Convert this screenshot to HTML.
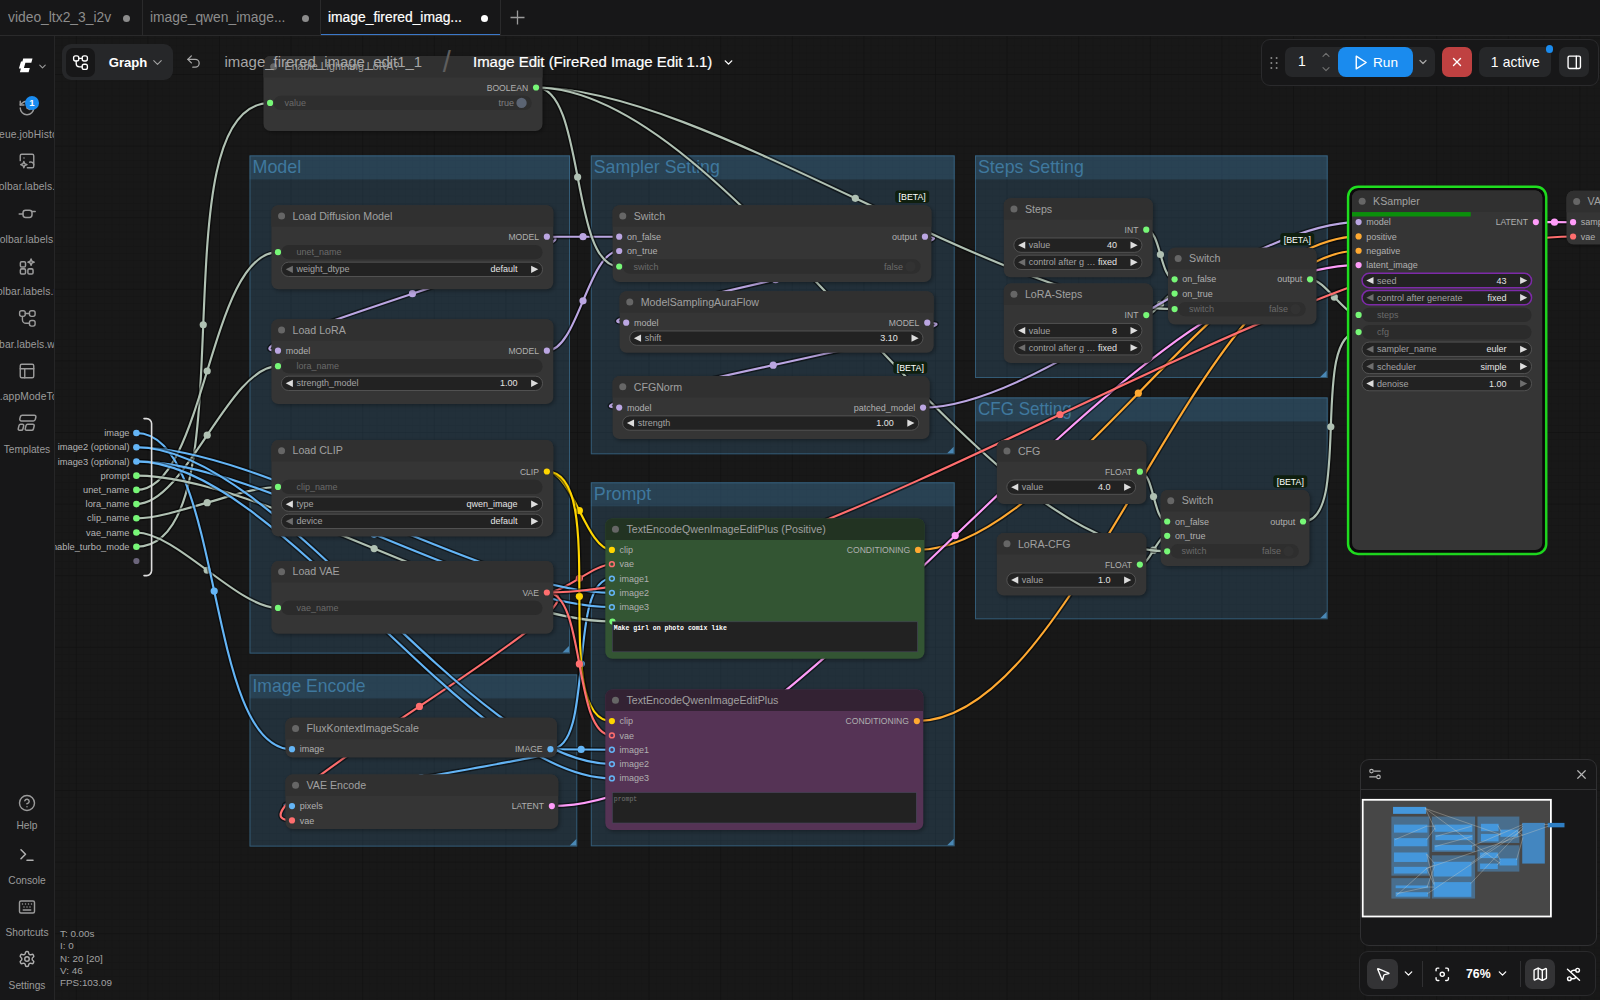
<!DOCTYPE html>
<html lang="en"><head><meta charset="utf-8"><title>ComfyUI</title>
<style>
html,body{margin:0;padding:0;background:#171717;}
body{width:1600px;height:1000px;position:relative;overflow:hidden;font-family:"Liberation Sans",sans-serif;color:#fff;}
#cv{position:absolute;left:0;top:0;}
.abs{position:absolute;}
#topbar{position:absolute;left:0;top:0;width:1600px;height:35px;background:#171718;border-bottom:1px solid #2a2a2b;}
.tab{position:absolute;top:0;height:35px;font-size:13.85px;color:#8c8c8c;line-height:35.5px;white-space:nowrap;}
.tab .dot{position:absolute;top:15px;width:7px;height:7px;border-radius:50%;background:#8c8c8c;}
.tab.act{color:#fff;-webkit-text-stroke:.2px #fff;border-bottom:1.5px solid #3b78c9;height:34px;}
.tab.act .dot{background:#fff;}
.tsep{position:absolute;top:0;width:1px;height:35px;background:#2a2a2b;}
#side{position:absolute;left:0;top:36px;width:54px;height:964px;background:#171718;border-right:1px solid #262627;overflow:hidden;}
.sb{position:absolute;left:0;width:54px;text-align:center;}
.sb svg{display:block;margin:0 auto;}
.sl{position:absolute;left:-73px;width:200px;text-align:center;font-size:10.3px;letter-spacing:.12px;margin-top:1.3px;color:#9b9b9b;white-space:nowrap;line-height:12px;}
#crumb{position:absolute;left:0;top:36px;}
.pill{position:absolute;left:62px;top:44px;width:111px;height:36px;border-radius:9px;background:#262729;}
.pill .ib{position:absolute;left:4px;top:3.5px;width:29px;height:29px;border-radius:7px;background:#171718;}
.pill .gt{position:absolute;left:46.8px;top:0.5px;line-height:36px;font-size:13.1px;font-weight:bold;color:#fff;}
.bc{position:absolute;top:50px;font-size:15.2px;line-height:24px;white-space:nowrap;}
#actbar{position:absolute;left:1261px;top:39px;width:335.5px;height:44.5px;border:1px solid #2a2a2c;border-radius:9px;background:#171718;}
.ab{position:absolute;top:47px;height:29.6px;border-radius:7px;background:#262729;}
#mini{position:absolute;left:1360px;top:758.7px;width:235px;height:185px;border:1px solid #303032;border-radius:9px;background:#171718;}
#tool{position:absolute;left:1359px;top:950.6px;width:235px;height:43.4px;border:1px solid #2a2a2c;border-radius:9px;background:#171718;}
#stats{position:absolute;left:60px;top:928px;font-size:9.85px;line-height:12.3px;color:#a2a2a2;white-space:pre;}

</style></head>
<body>
<svg id="cv" width="1600" height="1000" viewBox="0 0 1600 1000" font-family='"Liberation Sans", sans-serif'>
<defs><filter id="sh" x="-10%" y="-10%" width="120%" height="130%"><feGaussianBlur stdDeviation="2"/></filter>
<pattern id="grid" width="7.16" height="7.16" patternUnits="userSpaceOnUse" x="4.2" y="2.4"><path d="M0 0H7.16 M0 0V7.16" stroke="#141414" stroke-width="1" fill="none"/></pattern>
<pattern id="grid2" width="71.6" height="71.6" patternUnits="userSpaceOnUse" x="4.2" y="2.4"><path d="M0 0H71.6 M0 0V71.6" stroke="#0f0f0f" stroke-width="1.2" fill="none"/></pattern>
</defs>
<rect width="1600" height="1000" fill="#181818"/>
<rect width="1600" height="1000" fill="url(#grid)"/>
<rect width="1600" height="1000" fill="url(#grid2)"/>
<rect x="249.5" y="155.4" width="320.5" height="498.2" fill="#3f789e" fill-opacity=".25"/>
<rect x="249.5" y="155.4" width="320.5" height="24" fill="#3f789e" fill-opacity=".25"/>
<rect x="250" y="155.9" width="319.5" height="497.2" fill="none" stroke="#3f789e" stroke-opacity=".6" stroke-width="1"/>
<path d="M569 652.6 L562.5 652.6 L569 646.1 Z" fill="#4a88b5"/>
<text x="252.5" y="173" font-size="17.8" fill="#3f789e" textLength="48.7" lengthAdjust="spacingAndGlyphs">Model</text>
<rect x="590.8" y="155.4" width="363.9" height="298.9" fill="#3f789e" fill-opacity=".25"/>
<rect x="590.8" y="155.4" width="363.9" height="24" fill="#3f789e" fill-opacity=".25"/>
<rect x="591.3" y="155.9" width="362.9" height="297.9" fill="none" stroke="#3f789e" stroke-opacity=".6" stroke-width="1"/>
<path d="M953.7 453.3 L947.2 453.3 L953.7 446.8 Z" fill="#4a88b5"/>
<text x="593.8" y="173" font-size="17.8" fill="#3f789e" textLength="126" lengthAdjust="spacingAndGlyphs">Sampler Setting</text>
<rect x="975" y="155.4" width="352.7" height="222.6" fill="#3f789e" fill-opacity=".25"/>
<rect x="975" y="155.4" width="352.7" height="24" fill="#3f789e" fill-opacity=".25"/>
<rect x="975.5" y="155.9" width="351.7" height="221.6" fill="none" stroke="#3f789e" stroke-opacity=".6" stroke-width="1"/>
<path d="M1326.7 377 L1320.2 377 L1326.7 370.5 Z" fill="#4a88b5"/>
<text x="978" y="173" font-size="17.8" fill="#3f789e" textLength="105.8" lengthAdjust="spacingAndGlyphs">Steps Setting</text>
<rect x="975" y="397.4" width="352.7" height="221.9" fill="#3f789e" fill-opacity=".25"/>
<rect x="975" y="397.4" width="352.7" height="24" fill="#3f789e" fill-opacity=".25"/>
<rect x="975.5" y="397.9" width="351.7" height="220.9" fill="none" stroke="#3f789e" stroke-opacity=".6" stroke-width="1"/>
<path d="M1326.7 618.3 L1320.2 618.3 L1326.7 611.8 Z" fill="#4a88b5"/>
<text x="978" y="415" font-size="17.8" fill="#3f789e" textLength="93.7" lengthAdjust="spacingAndGlyphs">CFG Setting</text>
<rect x="590.8" y="482.3" width="363.9" height="364" fill="#3f789e" fill-opacity=".25"/>
<rect x="590.8" y="482.3" width="363.9" height="24" fill="#3f789e" fill-opacity=".25"/>
<rect x="591.3" y="482.8" width="362.9" height="363" fill="none" stroke="#3f789e" stroke-opacity=".6" stroke-width="1"/>
<path d="M953.7 845.3 L947.2 845.3 L953.7 838.8 Z" fill="#4a88b5"/>
<text x="593.8" y="499.9" font-size="17.8" fill="#3f789e" textLength="57.4" lengthAdjust="spacingAndGlyphs">Prompt</text>
<rect x="249.5" y="674.4" width="327.8" height="172.2" fill="#3f789e" fill-opacity=".25"/>
<rect x="249.5" y="674.4" width="327.8" height="24" fill="#3f789e" fill-opacity=".25"/>
<rect x="250" y="674.9" width="326.8" height="171.2" fill="none" stroke="#3f789e" stroke-opacity=".6" stroke-width="1"/>
<path d="M576.3 845.6 L569.8 845.6 L576.3 839.1 Z" fill="#4a88b5"/>
<text x="252.5" y="692" font-size="17.8" fill="#3f789e" textLength="113.1" lengthAdjust="spacingAndGlyphs">Image Encode</text>
<g fill="none" stroke-linecap="round">
<path d="M136.4 546.76 C252.27 546.76 154.21 102.96 270.09 102.96" stroke="#000" stroke-opacity=".5" stroke-width="5"/>
<path d="M136.4 546.76 C252.27 546.76 154.21 102.96 270.09 102.96" stroke="#b0c1b3" stroke-width="2.15"/>
<circle cx="203.24" cy="324.86" r="3.6" fill="#b0c1b3"/>
<path d="M136.4 489.88 C205.57 489.88 208.81 252.16 277.99 252.16" stroke="#000" stroke-opacity=".5" stroke-width="5"/>
<path d="M136.4 489.88 C205.57 489.88 208.81 252.16 277.99 252.16" stroke="#b0c1b3" stroke-width="2.15"/>
<circle cx="207.19" cy="371.02" r="3.6" fill="#b0c1b3"/>
<path d="M546.86 236.7 C619.87 236.7 204.98 350.7 277.99 350.7" stroke="#000" stroke-opacity=".5" stroke-width="5"/>
<path d="M546.86 236.7 C619.87 236.7 204.98 350.7 277.99 350.7" stroke="#bba6e2" stroke-width="2.15"/>
<circle cx="412.42" cy="293.7" r="3.6" fill="#bba6e2"/>
<path d="M136.4 504.1 C185.82 504.1 228.57 366.16 277.99 366.16" stroke="#000" stroke-opacity=".5" stroke-width="5"/>
<path d="M136.4 504.1 C185.82 504.1 228.57 366.16 277.99 366.16" stroke="#b0c1b3" stroke-width="2.15"/>
<circle cx="207.19" cy="435.13" r="3.6" fill="#b0c1b3"/>
<path d="M136.4 518.32 C172.65 518.32 241.73 486.96 277.99 486.96" stroke="#000" stroke-opacity=".5" stroke-width="5"/>
<path d="M136.4 518.32 C172.65 518.32 241.73 486.96 277.99 486.96" stroke="#b0c1b3" stroke-width="2.15"/>
<circle cx="207.19" cy="502.64" r="3.6" fill="#b0c1b3"/>
<path d="M136.4 532.54 C176.51 532.54 237.88 607.96 277.99 607.96" stroke="#000" stroke-opacity=".5" stroke-width="5"/>
<path d="M136.4 532.54 C176.51 532.54 237.88 607.96 277.99 607.96" stroke="#b0c1b3" stroke-width="2.15"/>
<circle cx="207.19" cy="570.25" r="3.6" fill="#b0c1b3"/>
<path d="M136.4 433 C224.5 433 203.88 749.2 291.99 749.2" stroke="#000" stroke-opacity=".5" stroke-width="5"/>
<path d="M136.4 433 C224.5 433 203.88 749.2 291.99 749.2" stroke="#64B5F6" stroke-width="2.15"/>
<circle cx="214.19" cy="591.1" r="3.6" fill="#64B5F6"/>
<path d="M550.46 749.2 C616.62 749.2 225.82 806.1 291.99 806.1" stroke="#000" stroke-opacity=".5" stroke-width="5"/>
<path d="M550.46 749.2 C616.62 749.2 225.82 806.1 291.99 806.1" stroke="#64B5F6" stroke-width="2.15"/>
<circle cx="421.22" cy="777.65" r="3.6" fill="#64B5F6"/>
<path d="M546.86 592.5 C632.33 592.5 206.51 820.42 291.99 820.42" stroke="#000" stroke-opacity=".5" stroke-width="5"/>
<path d="M546.86 592.5 C632.33 592.5 206.51 820.42 291.99 820.42" stroke="#FF6E6E" stroke-width="2.15"/>
<circle cx="419.42" cy="706.46" r="3.6" fill="#FF6E6E"/>
<path d="M546.86 236.7 C564.94 236.7 601.1 236.7 619.19 236.7" stroke="#000" stroke-opacity=".5" stroke-width="5"/>
<path d="M546.86 236.7 C564.94 236.7 601.1 236.7 619.19 236.7" stroke="#bba6e2" stroke-width="2.15"/>
<circle cx="583.02" cy="236.7" r="3.6" fill="#bba6e2"/>
<path d="M546.86 350.7 C577.65 350.7 588.4 251.02 619.19 251.02" stroke="#000" stroke-opacity=".5" stroke-width="5"/>
<path d="M546.86 350.7 C577.65 350.7 588.4 251.02 619.19 251.02" stroke="#bba6e2" stroke-width="2.15"/>
<circle cx="583.02" cy="300.86" r="3.6" fill="#bba6e2"/>
<path d="M536.06 87.5 C585.39 87.5 569.85 266.48 619.19 266.48" stroke="#000" stroke-opacity=".5" stroke-width="5"/>
<path d="M536.06 87.5 C585.39 87.5 569.85 266.48 619.19 266.48" stroke="#b0c1b3" stroke-width="2.15"/>
<circle cx="577.62" cy="176.99" r="3.6" fill="#b0c1b3"/>
<path d="M924.96 236.7 C1002.68 236.7 548.46 322.7 626.19 322.7" stroke="#000" stroke-opacity=".5" stroke-width="5"/>
<path d="M924.96 236.7 C1002.68 236.7 548.46 322.7 626.19 322.7" stroke="#bba6e2" stroke-width="2.15"/>
<circle cx="775.57" cy="279.7" r="3.6" fill="#bba6e2"/>
<path d="M927.26 322.7 C1007.14 322.7 539.3 407.6 619.19 407.6" stroke="#000" stroke-opacity=".5" stroke-width="5"/>
<path d="M927.26 322.7 C1007.14 322.7 539.3 407.6 619.19 407.6" stroke="#bba6e2" stroke-width="2.15"/>
<circle cx="773.22" cy="365.15" r="3.6" fill="#bba6e2"/>
<path d="M546.86 471.5 C572.32 471.5 586.42 549.9 611.89 549.9" stroke="#000" stroke-opacity=".5" stroke-width="5"/>
<path d="M546.86 471.5 C572.32 471.5 586.42 549.9 611.89 549.9" stroke="#FFD500" stroke-width="2.15"/>
<circle cx="579.37" cy="510.7" r="3.6" fill="#FFD500"/>
<path d="M546.86 592.5 C564.58 592.5 594.16 564.22 611.89 564.22" stroke="#000" stroke-opacity=".5" stroke-width="5"/>
<path d="M546.86 592.5 C564.58 592.5 594.16 564.22 611.89 564.22" stroke="#FF6E6E" stroke-width="2.15"/>
<circle cx="579.37" cy="578.36" r="3.6" fill="#FF6E6E"/>
<path d="M550.46 749.2 C595.8 749.2 566.54 578.54 611.89 578.54" stroke="#000" stroke-opacity=".5" stroke-width="5"/>
<path d="M550.46 749.2 C595.8 749.2 566.54 578.54 611.89 578.54" stroke="#64B5F6" stroke-width="2.15"/>
<circle cx="581.17" cy="663.87" r="3.6" fill="#64B5F6"/>
<path d="M136.4 447.22 C260.72 447.22 487.56 592.86 611.89 592.86" stroke="#000" stroke-opacity=".5" stroke-width="5"/>
<path d="M136.4 447.22 C260.72 447.22 487.56 592.86 611.89 592.86" stroke="#64B5F6" stroke-width="2.15"/>
<circle cx="374.14" cy="520.04" r="3.6" fill="#64B5F6"/>
<path d="M136.4 461.44 C260.73 461.44 487.56 607.18 611.89 607.18" stroke="#000" stroke-opacity=".5" stroke-width="5"/>
<path d="M136.4 461.44 C260.73 461.44 487.56 607.18 611.89 607.18" stroke="#64B5F6" stroke-width="2.15"/>
<circle cx="374.14" cy="534.31" r="3.6" fill="#64B5F6"/>
<path d="M136.4 475.66 C260.74 475.66 487.55 621.5 611.89 621.5" stroke="#000" stroke-opacity=".5" stroke-width="5"/>
<path d="M136.4 475.66 C260.74 475.66 487.55 621.5 611.89 621.5" stroke="#b0c1b3" stroke-width="2.15"/>
<circle cx="374.14" cy="548.58" r="3.6" fill="#b0c1b3"/>
<path d="M546.86 471.5 C611.34 471.5 547.4 721.1 611.89 721.1" stroke="#000" stroke-opacity=".5" stroke-width="5"/>
<path d="M546.86 471.5 C611.34 471.5 547.4 721.1 611.89 721.1" stroke="#FFD500" stroke-width="2.15"/>
<circle cx="579.37" cy="596.3" r="3.6" fill="#FFD500"/>
<path d="M546.86 592.5 C586.11 592.5 572.63 735.42 611.89 735.42" stroke="#000" stroke-opacity=".5" stroke-width="5"/>
<path d="M546.86 592.5 C586.11 592.5 572.63 735.42 611.89 735.42" stroke="#FF6E6E" stroke-width="2.15"/>
<circle cx="579.37" cy="663.96" r="3.6" fill="#FF6E6E"/>
<path d="M550.46 749.2 C565.81 749.2 596.53 749.74 611.89 749.74" stroke="#000" stroke-opacity=".5" stroke-width="5"/>
<path d="M550.46 749.2 C565.81 749.2 596.53 749.74 611.89 749.74" stroke="#64B5F6" stroke-width="2.15"/>
<circle cx="581.17" cy="749.47" r="3.6" fill="#64B5F6"/>
<path d="M136.4 447.22 C279.25 447.22 469.04 764.06 611.89 764.06" stroke="#000" stroke-opacity=".5" stroke-width="5"/>
<path d="M136.4 447.22 C279.25 447.22 469.04 764.06 611.89 764.06" stroke="#64B5F6" stroke-width="2.15"/>
<circle cx="374.14" cy="605.64" r="3.6" fill="#64B5F6"/>
<path d="M136.4 461.44 C279.26 461.44 469.03 778.38 611.89 778.38" stroke="#000" stroke-opacity=".5" stroke-width="5"/>
<path d="M136.4 461.44 C279.26 461.44 469.03 778.38 611.89 778.38" stroke="#64B5F6" stroke-width="2.15"/>
<circle cx="374.14" cy="619.91" r="3.6" fill="#64B5F6"/>
<path d="M1146.26 229.7 C1160.54 229.7 1160.31 279.3 1174.59 279.3" stroke="#000" stroke-opacity=".5" stroke-width="5"/>
<path d="M1146.26 229.7 C1160.54 229.7 1160.31 279.3 1174.59 279.3" stroke="#b0c1b3" stroke-width="2.15"/>
<circle cx="1160.42" cy="254.5" r="3.6" fill="#b0c1b3"/>
<path d="M1146.26 315.1 C1155.14 315.1 1165.7 293.62 1174.59 293.62" stroke="#000" stroke-opacity=".5" stroke-width="5"/>
<path d="M1146.26 315.1 C1155.14 315.1 1165.7 293.62 1174.59 293.62" stroke="#b0c1b3" stroke-width="2.15"/>
<circle cx="1160.42" cy="304.36" r="3.6" fill="#b0c1b3"/>
<path d="M536.06 87.5 C705.03 87.5 1005.62 309.08 1174.59 309.08" stroke="#000" stroke-opacity=".5" stroke-width="5"/>
<path d="M536.06 87.5 C705.03 87.5 1005.62 309.08 1174.59 309.08" stroke="#b0c1b3" stroke-width="2.15"/>
<circle cx="855.32" cy="198.29" r="3.6" fill="#b0c1b3"/>
<path d="M1139.86 471.7 C1154.06 471.7 1152.99 521.5 1167.19 521.5" stroke="#000" stroke-opacity=".5" stroke-width="5"/>
<path d="M1139.86 471.7 C1154.06 471.7 1152.99 521.5 1167.19 521.5" stroke="#b0c1b3" stroke-width="2.15"/>
<circle cx="1153.52" cy="496.6" r="3.6" fill="#b0c1b3"/>
<path d="M1139.86 564.6 C1149.78 564.6 1157.26 535.82 1167.19 535.82" stroke="#000" stroke-opacity=".5" stroke-width="5"/>
<path d="M1139.86 564.6 C1149.78 564.6 1157.26 535.82 1167.19 535.82" stroke="#b0c1b3" stroke-width="2.15"/>
<circle cx="1153.52" cy="550.21" r="3.6" fill="#b0c1b3"/>
<path d="M536.06 87.5 C731.86 87.5 971.39 551.28 1167.19 551.28" stroke="#000" stroke-opacity=".5" stroke-width="5"/>
<path d="M536.06 87.5 C731.86 87.5 971.39 551.28 1167.19 551.28" stroke="#b0c1b3" stroke-width="2.15"/>
<circle cx="851.62" cy="319.39" r="3.6" fill="#b0c1b3"/>
<path d="M923.06 407.6 C1041.4 407.6 1240.24 222.1 1358.59 222.1" stroke="#000" stroke-opacity=".5" stroke-width="5"/>
<path d="M923.06 407.6 C1041.4 407.6 1240.24 222.1 1358.59 222.1" stroke="#bba6e2" stroke-width="2.15"/>
<circle cx="1140.82" cy="314.85" r="3.6" fill="#bba6e2"/>
<path d="M918.06 549.9 C1053.23 549.9 1223.42 236.42 1358.59 236.42" stroke="#000" stroke-opacity=".5" stroke-width="5"/>
<path d="M918.06 549.9 C1053.23 549.9 1223.42 236.42 1358.59 236.42" stroke="#FFA931" stroke-width="2.15"/>
<circle cx="1138.32" cy="393.16" r="3.6" fill="#FFA931"/>
<path d="M916.86 721.1 C1078.17 721.1 1197.27 250.74 1358.59 250.74" stroke="#000" stroke-opacity=".5" stroke-width="5"/>
<path d="M916.86 721.1 C1078.17 721.1 1197.27 250.74 1358.59 250.74" stroke="#FFA931" stroke-width="2.15"/>
<circle cx="1137.72" cy="485.92" r="3.6" fill="#FFA931"/>
<path d="M551.86 806.1 C794.7 806.1 1115.75 265.06 1358.59 265.06" stroke="#000" stroke-opacity=".5" stroke-width="5"/>
<path d="M551.86 806.1 C794.7 806.1 1115.75 265.06 1358.59 265.06" stroke="#FF9CF9" stroke-width="2.15"/>
<circle cx="955.22" cy="535.58" r="3.6" fill="#FF9CF9"/>
<path d="M1310.06 279.3 C1325.1 279.3 1343.54 314.89 1358.59 314.89" stroke="#000" stroke-opacity=".5" stroke-width="5"/>
<path d="M1310.06 279.3 C1325.1 279.3 1343.54 314.89 1358.59 314.89" stroke="#b0c1b3" stroke-width="2.15"/>
<circle cx="1334.32" cy="297.1" r="3.6" fill="#b0c1b3"/>
<path d="M1303.06 521.5 C1352.41 521.5 1309.24 332.07 1358.59 332.07" stroke="#000" stroke-opacity=".5" stroke-width="5"/>
<path d="M1303.06 521.5 C1352.41 521.5 1309.24 332.07 1358.59 332.07" stroke="#b0c1b3" stroke-width="2.15"/>
<circle cx="1330.82" cy="426.79" r="3.6" fill="#b0c1b3"/>
<path d="M1535.86 222.1 C1545.16 222.1 1563.78 222.2 1573.09 222.2" stroke="#000" stroke-opacity=".5" stroke-width="5"/>
<path d="M1535.86 222.1 C1545.16 222.1 1563.78 222.2 1573.09 222.2" stroke="#FF9CF9" stroke-width="2.15"/>
<circle cx="1554.47" cy="222.15" r="3.6" fill="#FF9CF9"/>
<path d="M546.86 592.5 C818.41 592.5 1301.53 236.52 1573.09 236.52" stroke="#000" stroke-opacity=".5" stroke-width="5"/>
<path d="M546.86 592.5 C818.41 592.5 1301.53 236.52 1573.09 236.52" stroke="#FF6E6E" stroke-width="2.15"/>
<circle cx="1059.97" cy="414.51" r="3.6" fill="#FF6E6E"/>
</g>
<circle cx="136.4" cy="433" r="3.3" fill="#64B5F6"/>
<text x="129.5" y="436.1" font-size="9.3" fill="#b4b4b4" text-anchor="end">image</text>
<circle cx="136.4" cy="447.22" r="3.3" fill="#64B5F6"/>
<text x="129.5" y="450.32" font-size="9.3" fill="#b4b4b4" text-anchor="end">image2 (optional)</text>
<circle cx="136.4" cy="461.44" r="3.3" fill="#64B5F6"/>
<text x="129.5" y="464.54" font-size="9.3" fill="#b4b4b4" text-anchor="end">image3 (optional)</text>
<circle cx="136.4" cy="475.66" r="3.3" fill="#77f777"/>
<text x="129.5" y="478.76" font-size="9.3" fill="#b4b4b4" text-anchor="end">prompt</text>
<circle cx="136.4" cy="489.88" r="3.3" fill="#77f777"/>
<text x="129.5" y="492.98" font-size="9.3" fill="#b4b4b4" text-anchor="end">unet_name</text>
<circle cx="136.4" cy="504.1" r="3.3" fill="#77f777"/>
<text x="129.5" y="507.2" font-size="9.3" fill="#b4b4b4" text-anchor="end">lora_name</text>
<circle cx="136.4" cy="518.32" r="3.3" fill="#77f777"/>
<text x="129.5" y="521.42" font-size="9.3" fill="#b4b4b4" text-anchor="end">clip_name</text>
<circle cx="136.4" cy="532.54" r="3.3" fill="#77f777"/>
<text x="129.5" y="535.64" font-size="9.3" fill="#b4b4b4" text-anchor="end">vae_name</text>
<circle cx="136.4" cy="546.76" r="3.3" fill="#77f777"/>
<text x="129.5" y="549.86" font-size="9.3" fill="#b4b4b4" text-anchor="end">enable_turbo_mode</text>
<circle cx="136.4" cy="560.98" r="3.1" fill="#6b657b"/>
<path d="M144 418.6 h2.6 a5 5 0 0 1 5 5 v147 a5 5 0 0 1 -5 5 h-2.6" fill="none" stroke="#dedede" stroke-width="1.6" stroke-linecap="round"/>
<g>
<rect x="265" y="57.5" width="279" height="75" rx="7" fill="#000" fill-opacity=".35" filter="url(#sh)"/>
<rect x="263.5" y="56" width="279" height="75" rx="7" fill="#353535"/>
<path d="M270.5 56 h265 a7 7 0 0 1 7 7 v14.48 h-279 v-14.48 a7 7 0 0 1 7 -7 Z" fill="#303030"/>
<circle cx="273.67" cy="66.74" r="3.5" fill="#666"/>
<text x="284.62" y="70.44" font-size="10.65" fill="#a0a0a0">Enable Lightning LoRA?</text>
<circle cx="536.06" cy="87.5" r="3.1" fill="#77f777"/>
<text x="528.18" y="90.6" font-size="8.59" fill="#b0b0b0" text-anchor="end">BOOLEAN</text>
<circle cx="270.09" cy="102.96" r="3.1" fill="#77f777"/>
<rect x="273.52" y="95.8" width="258.24" height="14.32" rx="7.16" fill="#2e2e2e"/>
<text x="284.48" y="106.06" font-size="9" fill="#6a6a6a">value</text>
<text x="514" y="106.06" font-size="9" fill="#808080" text-anchor="end">true</text>
<circle cx="521.52" cy="102.96" r="5.16" fill="#5b6473"/>
</g>
<g>
<rect x="272.9" y="206.7" width="281.9" height="84" rx="7" fill="#000" fill-opacity=".35" filter="url(#sh)"/>
<rect x="271.4" y="205.2" width="281.9" height="84" rx="7" fill="#353535"/>
<path d="M278.4 205.2 h267.9 a7 7 0 0 1 7 7 v14.48 h-281.9 v-14.48 a7 7 0 0 1 7 -7 Z" fill="#303030"/>
<circle cx="281.57" cy="215.94" r="3.5" fill="#666"/>
<text x="292.52" y="219.64" font-size="10.65" fill="#a0a0a0">Load Diffusion Model</text>
<circle cx="546.86" cy="236.7" r="3.1" fill="#bba6e2"/>
<text x="538.98" y="239.8" font-size="8.59" fill="#b0b0b0" text-anchor="end">MODEL</text>
<circle cx="277.99" cy="252.16" r="3.1" fill="#77f777"/>
<rect x="281.42" y="245" width="261.14" height="14.32" rx="7.16" fill="#2b2b2b"/>
<text x="296.46" y="255.26" font-size="9" fill="#6a6a6a">unet_name</text>
<rect x="281.42" y="262.18" width="261.14" height="14.32" rx="7.16" fill="#222" stroke="#5c5c5c" stroke-width="0.8"/>
<path d="M292.88 265.76 L285.72 269.34 L292.88 272.92 Z" fill="#6e6e6e"/>
<path d="M531.1 265.76 L538.26 269.34 L531.1 272.92 Z" fill="#ddd"/>
<text x="296.46" y="272.44" font-size="9" fill="#a3a3a3">weight_dtype</text>
<text x="517.5" y="272.44" font-size="9" fill="#e4e4e4" text-anchor="end">default</text>
</g>
<g>
<rect x="272.9" y="320.7" width="281.9" height="84.8" rx="7" fill="#000" fill-opacity=".35" filter="url(#sh)"/>
<rect x="271.4" y="319.2" width="281.9" height="84.8" rx="7" fill="#353535"/>
<path d="M278.4 319.2 h267.9 a7 7 0 0 1 7 7 v14.48 h-281.9 v-14.48 a7 7 0 0 1 7 -7 Z" fill="#303030"/>
<circle cx="281.57" cy="329.94" r="3.5" fill="#666"/>
<text x="292.52" y="333.64" font-size="10.65" fill="#a0a0a0">Load LoRA</text>
<circle cx="277.99" cy="350.7" r="3.1" fill="#bba6e2"/>
<text x="285.72" y="353.8" font-size="9" fill="#b0b0b0">model</text>
<circle cx="546.86" cy="350.7" r="3.1" fill="#bba6e2"/>
<text x="538.98" y="353.8" font-size="8.59" fill="#b0b0b0" text-anchor="end">MODEL</text>
<circle cx="277.99" cy="366.16" r="3.1" fill="#77f777"/>
<rect x="281.42" y="359" width="261.14" height="14.32" rx="7.16" fill="#2b2b2b"/>
<text x="296.46" y="369.26" font-size="9" fill="#6a6a6a">lora_name</text>
<rect x="281.42" y="376.18" width="261.14" height="14.32" rx="7.16" fill="#222" stroke="#5c5c5c" stroke-width="0.8"/>
<path d="M292.88 379.76 L285.72 383.34 L292.88 386.92 Z" fill="#ddd"/>
<path d="M531.1 379.76 L538.26 383.34 L531.1 386.92 Z" fill="#ddd"/>
<text x="296.46" y="386.44" font-size="9" fill="#a3a3a3">strength_model</text>
<text x="517.5" y="386.44" font-size="9" fill="#e4e4e4" text-anchor="end">1.00</text>
</g>
<g>
<rect x="272.9" y="441.5" width="281.9" height="96.4" rx="7" fill="#000" fill-opacity=".35" filter="url(#sh)"/>
<rect x="271.4" y="440" width="281.9" height="96.4" rx="7" fill="#353535"/>
<path d="M278.4 440 h267.9 a7 7 0 0 1 7 7 v14.48 h-281.9 v-14.48 a7 7 0 0 1 7 -7 Z" fill="#303030"/>
<circle cx="281.57" cy="450.74" r="3.5" fill="#666"/>
<text x="292.52" y="454.44" font-size="10.65" fill="#a0a0a0">Load CLIP</text>
<circle cx="546.86" cy="471.5" r="3.1" fill="#FFD500"/>
<text x="538.98" y="474.6" font-size="8.59" fill="#b0b0b0" text-anchor="end">CLIP</text>
<circle cx="277.99" cy="486.96" r="3.1" fill="#77f777"/>
<rect x="281.42" y="479.8" width="261.14" height="14.32" rx="7.16" fill="#2b2b2b"/>
<text x="296.46" y="490.06" font-size="9" fill="#6a6a6a">clip_name</text>
<rect x="281.42" y="496.98" width="261.14" height="14.32" rx="7.16" fill="#222" stroke="#5c5c5c" stroke-width="0.8"/>
<path d="M292.88 500.56 L285.72 504.14 L292.88 507.72 Z" fill="#ddd"/>
<path d="M531.1 500.56 L538.26 504.14 L531.1 507.72 Z" fill="#ddd"/>
<text x="296.46" y="507.24" font-size="9" fill="#a3a3a3">type</text>
<text x="517.5" y="507.24" font-size="9" fill="#e4e4e4" text-anchor="end">qwen_image</text>
<rect x="281.42" y="514.17" width="261.14" height="14.32" rx="7.16" fill="#222" stroke="#5c5c5c" stroke-width="0.8"/>
<path d="M292.88 517.75 L285.72 521.33 L292.88 524.91 Z" fill="#6e6e6e"/>
<path d="M531.1 517.75 L538.26 521.33 L531.1 524.91 Z" fill="#ddd"/>
<text x="296.46" y="524.43" font-size="9" fill="#a3a3a3">device</text>
<text x="517.5" y="524.43" font-size="9" fill="#e4e4e4" text-anchor="end">default</text>
</g>
<g>
<rect x="272.9" y="562.5" width="281.9" height="72.7" rx="7" fill="#000" fill-opacity=".35" filter="url(#sh)"/>
<rect x="271.4" y="561" width="281.9" height="72.7" rx="7" fill="#353535"/>
<path d="M278.4 561 h267.9 a7 7 0 0 1 7 7 v14.48 h-281.9 v-14.48 a7 7 0 0 1 7 -7 Z" fill="#303030"/>
<circle cx="281.57" cy="571.74" r="3.5" fill="#666"/>
<text x="292.52" y="575.44" font-size="10.65" fill="#a0a0a0">Load VAE</text>
<circle cx="546.86" cy="592.5" r="3.1" fill="#FF6E6E"/>
<text x="538.98" y="595.6" font-size="8.59" fill="#b0b0b0" text-anchor="end">VAE</text>
<circle cx="277.99" cy="607.96" r="3.1" fill="#77f777"/>
<rect x="281.42" y="600.8" width="261.14" height="14.32" rx="7.16" fill="#2b2b2b"/>
<text x="296.46" y="611.06" font-size="9" fill="#6a6a6a">vae_name</text>
</g>
<g>
<rect x="286.9" y="719.2" width="271.5" height="39.7" rx="7" fill="#000" fill-opacity=".35" filter="url(#sh)"/>
<rect x="285.4" y="717.7" width="271.5" height="39.7" rx="7" fill="#353535"/>
<path d="M292.4 717.7 h257.5 a7 7 0 0 1 7 7 v14.48 h-271.5 v-14.48 a7 7 0 0 1 7 -7 Z" fill="#303030"/>
<circle cx="295.57" cy="728.44" r="3.5" fill="#666"/>
<text x="306.52" y="732.14" font-size="10.65" fill="#a0a0a0">FluxKontextImageScale</text>
<circle cx="291.99" cy="749.2" r="3.1" fill="#64B5F6"/>
<text x="299.72" y="752.3" font-size="9" fill="#b0b0b0">image</text>
<circle cx="550.46" cy="749.2" r="3.1" fill="#64B5F6"/>
<text x="542.58" y="752.3" font-size="8.59" fill="#b0b0b0" text-anchor="end">IMAGE</text>
</g>
<g>
<rect x="286.9" y="776.1" width="272.9" height="54.4" rx="7" fill="#000" fill-opacity=".35" filter="url(#sh)"/>
<rect x="285.4" y="774.6" width="272.9" height="54.4" rx="7" fill="#353535"/>
<path d="M292.4 774.6 h258.9 a7 7 0 0 1 7 7 v14.48 h-272.9 v-14.48 a7 7 0 0 1 7 -7 Z" fill="#303030"/>
<circle cx="295.57" cy="785.34" r="3.5" fill="#666"/>
<text x="306.52" y="789.04" font-size="10.65" fill="#a0a0a0">VAE Encode</text>
<circle cx="291.99" cy="806.1" r="3.1" fill="#64B5F6"/>
<text x="299.72" y="809.2" font-size="9" fill="#b0b0b0">pixels</text>
<circle cx="291.99" cy="820.42" r="3.1" fill="#FF6E6E"/>
<text x="299.72" y="823.52" font-size="9" fill="#b0b0b0">vae</text>
<circle cx="551.86" cy="806.1" r="3.1" fill="#FF9CF9"/>
<text x="543.98" y="809.2" font-size="8.59" fill="#b0b0b0" text-anchor="end">LATENT</text>
</g>
<g>
<rect x="614.1" y="206.7" width="318.8" height="76.8" rx="7" fill="#000" fill-opacity=".35" filter="url(#sh)"/>
<rect x="612.6" y="205.2" width="318.8" height="76.8" rx="7" fill="#353535"/>
<path d="M619.6 205.2 h304.8 a7 7 0 0 1 7 7 v14.48 h-318.8 v-14.48 a7 7 0 0 1 7 -7 Z" fill="#303030"/>
<circle cx="622.77" cy="215.94" r="3.5" fill="#666"/>
<text x="633.72" y="219.64" font-size="10.65" fill="#a0a0a0">Switch</text>
<circle cx="619.19" cy="236.7" r="3.1" fill="#bba6e2"/>
<text x="626.92" y="239.8" font-size="9" fill="#b0b0b0">on_false</text>
<circle cx="619.19" cy="251.02" r="3.1" fill="#bba6e2"/>
<text x="626.92" y="254.12" font-size="9" fill="#b0b0b0">on_true</text>
<circle cx="924.96" cy="236.7" r="3.1" fill="#bba6e2"/>
<text x="917.08" y="239.8" font-size="9" fill="#b0b0b0" text-anchor="end">output</text>
<circle cx="619.19" cy="266.48" r="3.1" fill="#77f777"/>
<rect x="622.62" y="259.32" width="298.04" height="14.32" rx="7.16" fill="#2e2e2e"/>
<text x="633.58" y="269.58" font-size="9" fill="#6a6a6a">switch</text>
<text x="902.9" y="269.58" font-size="9" fill="#6a6a6a" text-anchor="end">false</text>
<circle cx="910.42" cy="266.48" r="5.16" fill="#323232"/>
<rect x="895.2" y="190.5" width="34" height="12.4" rx="3" fill="#0f1f0f"/>
<text x="912.2" y="200.1" font-size="8.8" fill="#fff" text-anchor="middle">[BETA]</text>
</g>
<g>
<rect x="621.1" y="292.7" width="314.1" height="61.5" rx="7" fill="#000" fill-opacity=".35" filter="url(#sh)"/>
<rect x="619.6" y="291.2" width="314.1" height="61.5" rx="7" fill="#353535"/>
<path d="M626.6 291.2 h300.1 a7 7 0 0 1 7 7 v14.48 h-314.1 v-14.48 a7 7 0 0 1 7 -7 Z" fill="#303030"/>
<circle cx="629.77" cy="301.94" r="3.5" fill="#666"/>
<text x="640.72" y="305.64" font-size="10.65" fill="#a0a0a0">ModelSamplingAuraFlow</text>
<circle cx="626.19" cy="322.7" r="3.1" fill="#bba6e2"/>
<text x="633.92" y="325.8" font-size="9" fill="#b0b0b0">model</text>
<circle cx="927.26" cy="322.7" r="3.1" fill="#bba6e2"/>
<text x="919.38" y="325.8" font-size="8.59" fill="#b0b0b0" text-anchor="end">MODEL</text>
<rect x="629.62" y="331" width="293.34" height="14.32" rx="7.16" fill="#222" stroke="#5c5c5c" stroke-width="0.8"/>
<path d="M641.08 334.58 L633.92 338.16 L641.08 341.74 Z" fill="#ddd"/>
<path d="M911.5 334.58 L918.66 338.16 L911.5 341.74 Z" fill="#ddd"/>
<text x="644.66" y="341.26" font-size="9" fill="#a3a3a3">shift</text>
<text x="897.9" y="341.26" font-size="9" fill="#e4e4e4" text-anchor="end">3.10</text>
</g>
<g>
<rect x="614.1" y="377.6" width="316.9" height="62.9" rx="7" fill="#000" fill-opacity=".35" filter="url(#sh)"/>
<rect x="612.6" y="376.1" width="316.9" height="62.9" rx="7" fill="#353535"/>
<path d="M619.6 376.1 h302.9 a7 7 0 0 1 7 7 v14.48 h-316.9 v-14.48 a7 7 0 0 1 7 -7 Z" fill="#303030"/>
<circle cx="622.77" cy="386.84" r="3.5" fill="#666"/>
<text x="633.72" y="390.54" font-size="10.65" fill="#a0a0a0">CFGNorm</text>
<circle cx="619.19" cy="407.6" r="3.1" fill="#bba6e2"/>
<text x="626.92" y="410.7" font-size="9" fill="#b0b0b0">model</text>
<circle cx="923.06" cy="407.6" r="3.1" fill="#bba6e2"/>
<text x="915.18" y="410.7" font-size="9" fill="#b0b0b0" text-anchor="end">patched_model</text>
<rect x="622.62" y="415.9" width="296.14" height="14.32" rx="7.16" fill="#222" stroke="#5c5c5c" stroke-width="0.8"/>
<path d="M634.08 419.48 L626.92 423.06 L634.08 426.64 Z" fill="#ddd"/>
<path d="M907.3 419.48 L914.46 423.06 L907.3 426.64 Z" fill="#ddd"/>
<text x="637.66" y="426.16" font-size="9" fill="#a3a3a3">strength</text>
<text x="893.7" y="426.16" font-size="9" fill="#e4e4e4" text-anchor="end">1.00</text>
<rect x="893.3" y="361.4" width="34" height="12.4" rx="3" fill="#0f1f0f"/>
<text x="910.3" y="371" font-size="8.8" fill="#fff" text-anchor="middle">[BETA]</text>
</g>
<g>
<rect x="606.8" y="519.9" width="319.2" height="140.4" rx="7" fill="#000" fill-opacity=".35" filter="url(#sh)"/>
<rect x="605.3" y="518.4" width="319.2" height="140.4" rx="7" fill="#335533"/>
<path d="M612.3 518.4 h305.2 a7 7 0 0 1 7 7 v14.48 h-319.2 v-14.48 a7 7 0 0 1 7 -7 Z" fill="#223322"/>
<circle cx="615.47" cy="529.14" r="3.5" fill="#666"/>
<text x="626.42" y="532.84" font-size="10.65" fill="#a0a0a0">TextEncodeQwenImageEditPlus (Positive)</text>
<circle cx="611.89" cy="549.9" r="3.1" fill="#FFD500"/>
<text x="619.62" y="553" font-size="9" fill="#b0b0b0">clip</text>
<circle cx="611.89" cy="564.22" r="2.4" fill="none" stroke="#FF6E6E" stroke-width="1.5"/>
<text x="619.62" y="567.32" font-size="9" fill="#b0b0b0">vae</text>
<circle cx="611.89" cy="578.54" r="2.4" fill="none" stroke="#64B5F6" stroke-width="1.5"/>
<text x="619.62" y="581.64" font-size="9" fill="#b0b0b0">image1</text>
<circle cx="611.89" cy="592.86" r="2.4" fill="none" stroke="#64B5F6" stroke-width="1.5"/>
<text x="619.62" y="595.96" font-size="9" fill="#b0b0b0">image2</text>
<circle cx="611.89" cy="607.18" r="2.4" fill="none" stroke="#64B5F6" stroke-width="1.5"/>
<text x="619.62" y="610.28" font-size="9" fill="#b0b0b0">image3</text>
<circle cx="918.06" cy="549.9" r="3.1" fill="#FFA931"/>
<text x="910.18" y="553" font-size="8.59" fill="#b0b0b0" text-anchor="end">CONDITIONING</text>
<circle cx="612.46" cy="621.5" r="3.1" fill="#77f777"/>
<rect x="612.3" y="621.8" width="305.2" height="30" fill="#222" stroke="#46465a" stroke-width=".6"/>
<text x="613.8" y="630" font-family="&quot;Liberation Mono&quot;, monospace" font-size="6.5" fill="#fff" font-weight="bold">Make girl on photo comix like</text>
</g>
<g>
<rect x="606.8" y="691.1" width="318" height="140.4" rx="7" fill="#000" fill-opacity=".35" filter="url(#sh)"/>
<rect x="605.3" y="689.6" width="318" height="140.4" rx="7" fill="#553355"/>
<path d="M612.3 689.6 h304 a7 7 0 0 1 7 7 v14.48 h-318 v-14.48 a7 7 0 0 1 7 -7 Z" fill="#332233"/>
<circle cx="615.47" cy="700.34" r="3.5" fill="#666"/>
<text x="626.42" y="704.04" font-size="10.65" fill="#a0a0a0">TextEncodeQwenImageEditPlus</text>
<circle cx="611.89" cy="721.1" r="3.1" fill="#FFD500"/>
<text x="619.62" y="724.2" font-size="9" fill="#b0b0b0">clip</text>
<circle cx="611.89" cy="735.42" r="2.4" fill="none" stroke="#FF6E6E" stroke-width="1.5"/>
<text x="619.62" y="738.52" font-size="9" fill="#b0b0b0">vae</text>
<circle cx="611.89" cy="749.74" r="2.4" fill="none" stroke="#64B5F6" stroke-width="1.5"/>
<text x="619.62" y="752.84" font-size="9" fill="#b0b0b0">image1</text>
<circle cx="611.89" cy="764.06" r="2.4" fill="none" stroke="#64B5F6" stroke-width="1.5"/>
<text x="619.62" y="767.16" font-size="9" fill="#b0b0b0">image2</text>
<circle cx="611.89" cy="778.38" r="2.4" fill="none" stroke="#64B5F6" stroke-width="1.5"/>
<text x="619.62" y="781.48" font-size="9" fill="#b0b0b0">image3</text>
<circle cx="916.86" cy="721.1" r="3.1" fill="#FFA931"/>
<text x="908.98" y="724.2" font-size="8.59" fill="#b0b0b0" text-anchor="end">CONDITIONING</text>
<rect x="612.3" y="792.6" width="304" height="30.4" fill="#222" stroke="#46465a" stroke-width=".6"/>
<text x="613.8" y="800.8" font-family="&quot;Liberation Mono&quot;, monospace" font-size="6.5" fill="#757575">prompt</text>
</g>
<g>
<rect x="1005.3" y="199.7" width="148.9" height="79" rx="7" fill="#000" fill-opacity=".35" filter="url(#sh)"/>
<rect x="1003.8" y="198.2" width="148.9" height="79" rx="7" fill="#353535"/>
<path d="M1010.8 198.2 h134.9 a7 7 0 0 1 7 7 v14.48 h-148.9 v-14.48 a7 7 0 0 1 7 -7 Z" fill="#303030"/>
<circle cx="1013.97" cy="208.94" r="3.5" fill="#666"/>
<text x="1024.92" y="212.64" font-size="10.65" fill="#a0a0a0">Steps</text>
<circle cx="1146.26" cy="229.7" r="3.1" fill="#77f777"/>
<text x="1138.38" y="232.8" font-size="8.59" fill="#b0b0b0" text-anchor="end">INT</text>
<rect x="1013.82" y="238" width="128.14" height="14.32" rx="7.16" fill="#222" stroke="#5c5c5c" stroke-width="0.8"/>
<path d="M1025.28 241.58 L1018.12 245.16 L1025.28 248.74 Z" fill="#ddd"/>
<path d="M1130.5 241.58 L1137.66 245.16 L1130.5 248.74 Z" fill="#ddd"/>
<text x="1028.86" y="248.26" font-size="9" fill="#a3a3a3">value</text>
<text x="1116.9" y="248.26" font-size="9" fill="#e4e4e4" text-anchor="end">40</text>
<rect x="1013.82" y="255.18" width="128.14" height="14.32" rx="7.16" fill="#222" stroke="#5c5c5c" stroke-width="0.8"/>
<path d="M1025.28 258.76 L1018.12 262.34 L1025.28 265.92 Z" fill="#6e6e6e"/>
<path d="M1130.5 258.76 L1137.66 262.34 L1130.5 265.92 Z" fill="#ddd"/>
<text x="1028.86" y="265.44" font-size="9" fill="#a3a3a3">control after g …</text>
<text x="1116.9" y="265.44" font-size="9" fill="#e4e4e4" text-anchor="end">fixed</text>
</g>
<g>
<rect x="1005.3" y="285.1" width="148.9" height="79.4" rx="7" fill="#000" fill-opacity=".35" filter="url(#sh)"/>
<rect x="1003.8" y="283.6" width="148.9" height="79.4" rx="7" fill="#353535"/>
<path d="M1010.8 283.6 h134.9 a7 7 0 0 1 7 7 v14.48 h-148.9 v-14.48 a7 7 0 0 1 7 -7 Z" fill="#303030"/>
<circle cx="1013.97" cy="294.34" r="3.5" fill="#666"/>
<text x="1024.92" y="298.04" font-size="10.65" fill="#a0a0a0">LoRA-Steps</text>
<circle cx="1146.26" cy="315.1" r="3.1" fill="#77f777"/>
<text x="1138.38" y="318.2" font-size="8.59" fill="#b0b0b0" text-anchor="end">INT</text>
<rect x="1013.82" y="323.4" width="128.14" height="14.32" rx="7.16" fill="#222" stroke="#5c5c5c" stroke-width="0.8"/>
<path d="M1025.28 326.98 L1018.12 330.56 L1025.28 334.14 Z" fill="#ddd"/>
<path d="M1130.5 326.98 L1137.66 330.56 L1130.5 334.14 Z" fill="#ddd"/>
<text x="1028.86" y="333.66" font-size="9" fill="#a3a3a3">value</text>
<text x="1116.9" y="333.66" font-size="9" fill="#e4e4e4" text-anchor="end">8</text>
<rect x="1013.82" y="340.58" width="128.14" height="14.32" rx="7.16" fill="#222" stroke="#5c5c5c" stroke-width="0.8"/>
<path d="M1025.28 344.16 L1018.12 347.74 L1025.28 351.32 Z" fill="#6e6e6e"/>
<path d="M1130.5 344.16 L1137.66 347.74 L1130.5 351.32 Z" fill="#ddd"/>
<text x="1028.86" y="350.84" font-size="9" fill="#a3a3a3">control after g …</text>
<text x="1116.9" y="350.84" font-size="9" fill="#e4e4e4" text-anchor="end">fixed</text>
</g>
<g>
<rect x="1169.5" y="249.3" width="148.5" height="76.7" rx="7" fill="#000" fill-opacity=".35" filter="url(#sh)"/>
<rect x="1168" y="247.8" width="148.5" height="76.7" rx="7" fill="#353535"/>
<path d="M1175 247.8 h134.5 a7 7 0 0 1 7 7 v14.48 h-148.5 v-14.48 a7 7 0 0 1 7 -7 Z" fill="#303030"/>
<circle cx="1178.17" cy="258.54" r="3.5" fill="#666"/>
<text x="1189.12" y="262.24" font-size="10.65" fill="#a0a0a0">Switch</text>
<circle cx="1174.59" cy="279.3" r="3.1" fill="#77f777"/>
<text x="1182.32" y="282.4" font-size="9" fill="#b0b0b0">on_false</text>
<circle cx="1174.59" cy="293.62" r="3.1" fill="#77f777"/>
<text x="1182.32" y="296.72" font-size="9" fill="#b0b0b0">on_true</text>
<circle cx="1310.06" cy="279.3" r="3.1" fill="#77f777"/>
<text x="1302.18" y="282.4" font-size="9" fill="#b0b0b0" text-anchor="end">output</text>
<circle cx="1174.59" cy="309.08" r="3.1" fill="#77f777"/>
<rect x="1178.02" y="301.92" width="127.74" height="14.32" rx="7.16" fill="#2e2e2e"/>
<text x="1188.98" y="312.18" font-size="9" fill="#6a6a6a">switch</text>
<text x="1288" y="312.18" font-size="9" fill="#6a6a6a" text-anchor="end">false</text>
<circle cx="1295.52" cy="309.08" r="5.16" fill="#323232"/>
<rect x="1280.3" y="233.1" width="34" height="12.4" rx="3" fill="#0f1f0f"/>
<text x="1297.3" y="242.7" font-size="8.8" fill="#fff" text-anchor="middle">[BETA]</text>
</g>
<g>
<rect x="998.3" y="441.7" width="149.5" height="63.8" rx="7" fill="#000" fill-opacity=".35" filter="url(#sh)"/>
<rect x="996.8" y="440.2" width="149.5" height="63.8" rx="7" fill="#353535"/>
<path d="M1003.8 440.2 h135.5 a7 7 0 0 1 7 7 v14.48 h-149.5 v-14.48 a7 7 0 0 1 7 -7 Z" fill="#303030"/>
<circle cx="1006.97" cy="450.94" r="3.5" fill="#666"/>
<text x="1017.92" y="454.64" font-size="10.65" fill="#a0a0a0">CFG</text>
<circle cx="1139.86" cy="471.7" r="3.1" fill="#77f777"/>
<text x="1131.98" y="474.8" font-size="8.59" fill="#b0b0b0" text-anchor="end">FLOAT</text>
<rect x="1006.82" y="480" width="128.74" height="14.32" rx="7.16" fill="#222" stroke="#5c5c5c" stroke-width="0.8"/>
<path d="M1018.28 483.58 L1011.12 487.16 L1018.28 490.74 Z" fill="#ddd"/>
<path d="M1124.1 483.58 L1131.26 487.16 L1124.1 490.74 Z" fill="#ddd"/>
<text x="1021.86" y="490.26" font-size="9" fill="#a3a3a3">value</text>
<text x="1110.5" y="490.26" font-size="9" fill="#e4e4e4" text-anchor="end">4.0</text>
</g>
<g>
<rect x="998.3" y="534.6" width="149.5" height="62.4" rx="7" fill="#000" fill-opacity=".35" filter="url(#sh)"/>
<rect x="996.8" y="533.1" width="149.5" height="62.4" rx="7" fill="#353535"/>
<path d="M1003.8 533.1 h135.5 a7 7 0 0 1 7 7 v14.48 h-149.5 v-14.48 a7 7 0 0 1 7 -7 Z" fill="#303030"/>
<circle cx="1006.97" cy="543.84" r="3.5" fill="#666"/>
<text x="1017.92" y="547.54" font-size="10.65" fill="#a0a0a0">LoRA-CFG</text>
<circle cx="1139.86" cy="564.6" r="3.1" fill="#77f777"/>
<text x="1131.98" y="567.7" font-size="8.59" fill="#b0b0b0" text-anchor="end">FLOAT</text>
<rect x="1006.82" y="572.9" width="128.74" height="14.32" rx="7.16" fill="#222" stroke="#5c5c5c" stroke-width="0.8"/>
<path d="M1018.28 576.48 L1011.12 580.06 L1018.28 583.64 Z" fill="#ddd"/>
<path d="M1124.1 576.48 L1131.26 580.06 L1124.1 583.64 Z" fill="#ddd"/>
<text x="1021.86" y="583.16" font-size="9" fill="#a3a3a3">value</text>
<text x="1110.5" y="583.16" font-size="9" fill="#e4e4e4" text-anchor="end">1.0</text>
</g>
<g>
<rect x="1162.1" y="491.5" width="148.9" height="76" rx="7" fill="#000" fill-opacity=".35" filter="url(#sh)"/>
<rect x="1160.6" y="490" width="148.9" height="76" rx="7" fill="#353535"/>
<path d="M1167.6 490 h134.9 a7 7 0 0 1 7 7 v14.48 h-148.9 v-14.48 a7 7 0 0 1 7 -7 Z" fill="#303030"/>
<circle cx="1170.77" cy="500.74" r="3.5" fill="#666"/>
<text x="1181.72" y="504.44" font-size="10.65" fill="#a0a0a0">Switch</text>
<circle cx="1167.19" cy="521.5" r="3.1" fill="#77f777"/>
<text x="1174.92" y="524.6" font-size="9" fill="#b0b0b0">on_false</text>
<circle cx="1167.19" cy="535.82" r="3.1" fill="#77f777"/>
<text x="1174.92" y="538.92" font-size="9" fill="#b0b0b0">on_true</text>
<circle cx="1303.06" cy="521.5" r="3.1" fill="#77f777"/>
<text x="1295.18" y="524.6" font-size="9" fill="#b0b0b0" text-anchor="end">output</text>
<circle cx="1167.19" cy="551.28" r="3.1" fill="#77f777"/>
<rect x="1170.62" y="544.12" width="128.14" height="14.32" rx="7.16" fill="#2e2e2e"/>
<text x="1181.58" y="554.38" font-size="9" fill="#6a6a6a">switch</text>
<text x="1281" y="554.38" font-size="9" fill="#6a6a6a" text-anchor="end">false</text>
<circle cx="1288.52" cy="551.28" r="5.16" fill="#323232"/>
<rect x="1273.3" y="475.3" width="34" height="12.4" rx="3" fill="#0f1f0f"/>
<text x="1290.3" y="484.9" font-size="8.8" fill="#fff" text-anchor="middle">[BETA]</text>
</g>
<g>
<rect x="1348.1" y="186.7" width="198.1" height="367.2" rx="10" fill="#0a0a0a" stroke="#1fde1f" stroke-width="2.5"/>
<rect x="1353.5" y="192.1" width="190.3" height="359.4" rx="7" fill="#000" fill-opacity=".35" filter="url(#sh)"/>
<rect x="1352" y="190.6" width="190.3" height="359.4" rx="7" fill="#353535"/>
<path d="M1359 190.6 h176.3 a7 7 0 0 1 7 7 v14.48 h-190.3 v-14.48 a7 7 0 0 1 7 -7 Z" fill="#303030"/>
<circle cx="1362.17" cy="201.34" r="3.5" fill="#666"/>
<text x="1373.12" y="205.04" font-size="10.65" fill="#a0a0a0">KSampler</text>
<rect x="1352" y="212.08" width="118.75" height="4.4" fill="#0b8f0b"/>
<circle cx="1358.59" cy="222.1" r="3.1" fill="#bba6e2"/>
<text x="1366.32" y="225.2" font-size="9" fill="#b0b0b0">model</text>
<circle cx="1358.59" cy="236.42" r="3.1" fill="#FFA931"/>
<text x="1366.32" y="239.52" font-size="9" fill="#b0b0b0">positive</text>
<circle cx="1358.59" cy="250.74" r="3.1" fill="#FFA931"/>
<text x="1366.32" y="253.84" font-size="9" fill="#b0b0b0">negative</text>
<circle cx="1358.59" cy="265.06" r="3.1" fill="#FF9CF9"/>
<text x="1366.32" y="268.16" font-size="9" fill="#b0b0b0">latent_image</text>
<circle cx="1535.86" cy="222.1" r="3.1" fill="#FF9CF9"/>
<text x="1527.98" y="225.2" font-size="8.59" fill="#b0b0b0" text-anchor="end">LATENT</text>
<rect x="1362.02" y="273.36" width="169.54" height="14.32" rx="7.16" fill="#222" stroke="#7d2aa8" stroke-width="1.5"/>
<path d="M1373.48 276.94 L1366.32 280.52 L1373.48 284.1 Z" fill="#ddd"/>
<path d="M1520.1 276.94 L1527.26 280.52 L1520.1 284.1 Z" fill="#ddd"/>
<text x="1377.06" y="283.62" font-size="9" fill="#a3a3a3">seed</text>
<text x="1506.5" y="283.62" font-size="9" fill="#e4e4e4" text-anchor="end">43</text>
<rect x="1362.02" y="290.54" width="169.54" height="14.32" rx="7.16" fill="#222" stroke="#7d2aa8" stroke-width="1.5"/>
<path d="M1373.48 294.12 L1366.32 297.7 L1373.48 301.28 Z" fill="#6e6e6e"/>
<path d="M1520.1 294.12 L1527.26 297.7 L1520.1 301.28 Z" fill="#ddd"/>
<text x="1377.06" y="300.8" font-size="9" fill="#a3a3a3">control after generate</text>
<text x="1506.5" y="300.8" font-size="9" fill="#e4e4e4" text-anchor="end">fixed</text>
<circle cx="1358.59" cy="314.89" r="3.1" fill="#77f777"/>
<rect x="1362.02" y="307.73" width="169.54" height="14.32" rx="7.16" fill="#2b2b2b"/>
<text x="1377.06" y="317.99" font-size="9" fill="#6a6a6a">steps</text>
<circle cx="1358.59" cy="332.07" r="3.1" fill="#77f777"/>
<rect x="1362.02" y="324.91" width="169.54" height="14.32" rx="7.16" fill="#2b2b2b"/>
<text x="1377.06" y="335.17" font-size="9" fill="#6a6a6a">cfg</text>
<rect x="1362.02" y="342.1" width="169.54" height="14.32" rx="7.16" fill="#222" stroke="#5c5c5c" stroke-width="0.8"/>
<path d="M1373.48 345.68 L1366.32 349.26 L1373.48 352.84 Z" fill="#6e6e6e"/>
<path d="M1520.1 345.68 L1527.26 349.26 L1520.1 352.84 Z" fill="#ddd"/>
<text x="1377.06" y="352.36" font-size="9" fill="#a3a3a3">sampler_name</text>
<text x="1506.5" y="352.36" font-size="9" fill="#e4e4e4" text-anchor="end">euler</text>
<rect x="1362.02" y="359.28" width="169.54" height="14.32" rx="7.16" fill="#222" stroke="#5c5c5c" stroke-width="0.8"/>
<path d="M1373.48 362.86 L1366.32 366.44 L1373.48 370.02 Z" fill="#6e6e6e"/>
<path d="M1520.1 362.86 L1527.26 366.44 L1520.1 370.02 Z" fill="#ddd"/>
<text x="1377.06" y="369.54" font-size="9" fill="#a3a3a3">scheduler</text>
<text x="1506.5" y="369.54" font-size="9" fill="#e4e4e4" text-anchor="end">simple</text>
<rect x="1362.02" y="376.46" width="169.54" height="14.32" rx="7.16" fill="#222" stroke="#5c5c5c" stroke-width="0.8"/>
<path d="M1373.48 380.04 L1366.32 383.62 L1373.48 387.2 Z" fill="#ddd"/>
<path d="M1520.1 380.04 L1527.26 383.62 L1520.1 387.2 Z" fill="#6e6e6e"/>
<text x="1377.06" y="386.72" font-size="9" fill="#a3a3a3">denoise</text>
<text x="1506.5" y="386.72" font-size="9" fill="#e4e4e4" text-anchor="end">1.00</text>
</g>
<g>
<rect x="1568" y="192.2" width="141.5" height="53.8" rx="7" fill="#000" fill-opacity=".35" filter="url(#sh)"/>
<rect x="1566.5" y="190.7" width="141.5" height="53.8" rx="7" fill="#353535"/>
<path d="M1573.5 190.7 h127.5 a7 7 0 0 1 7 7 v14.48 h-141.5 v-14.48 a7 7 0 0 1 7 -7 Z" fill="#303030"/>
<circle cx="1576.67" cy="201.44" r="3.5" fill="#666"/>
<text x="1587.62" y="205.14" font-size="10.65" fill="#a0a0a0">VAE Decode</text>
<circle cx="1573.09" cy="222.2" r="3.1" fill="#FF9CF9"/>
<text x="1580.82" y="225.3" font-size="9" fill="#b0b0b0">samples</text>
<circle cx="1573.09" cy="236.52" r="3.1" fill="#FF6E6E"/>
<text x="1580.82" y="239.62" font-size="9" fill="#b0b0b0">vae</text>
<circle cx="1701.56" cy="222.2" r="3.1" fill="#64B5F6"/>
<text x="1693.68" y="225.3" font-size="8.59" fill="#b0b0b0" text-anchor="end">IMAGE</text>
</g>
</svg>
<!-- breadcrumb row (transparent, over canvas) -->
<div class="pill">
  <div class="ib"><svg width="29" height="29" viewBox="0 0 29 29" fill="none" stroke="#fff" stroke-width="1.35" stroke-linecap="round" stroke-linejoin="round"><rect x="7.6" y="7.8" width="5.2" height="5.2" rx="1.9"/><rect x="16.2" y="7.8" width="5.2" height="5.2" rx="1.9"/><rect x="16.2" y="16.2" width="5.2" height="5.2" rx="1.9"/><path d="M12.8 10.4h3.4"/><path d="M10.2 13v2.6a3.2 3.2 0 0 0 3.2 3.2h2.8"/></svg></div>
  <div class="gt">Graph</div>
  <svg class="abs" style="left:88px;top:10.5px" width="15" height="15" viewBox="0 0 24 24" fill="none" stroke="#a4a4a4" stroke-width="1.7" stroke-linecap="round" stroke-linejoin="round"><path d="m6 9 6 6 6-6"/></svg>
</div>
<svg class="abs" style="left:185px;top:53px" width="17" height="17" viewBox="0 0 24 24" fill="none" stroke="#a8a8a8" stroke-width="1.8" stroke-linecap="round" stroke-linejoin="round"><path d="M9 14 4 9l5-5"/><path d="M4 9h10.5a5.5 5.5 0 0 1 5.5 5.5a5.5 5.5 0 0 1-5.5 5.5H11"/></svg>
<div class="bc" style="left:224.5px;color:#a6a6a6;font-size:14.95px">image_firered_image_edit1_1</div>
<div class="bc" style="left:443.3px;color:#5e5e5e;font-size:29px;top:49.5px;left:442.8px">/</div>
<div class="bc" style="left:473px;color:#fff;font-size:14.96px;-webkit-text-stroke:.2px #fff">Image Edit (FireRed Image Edit 1.1)</div>
<svg class="abs" style="left:722px;top:56px" width="13" height="13" viewBox="0 0 24 24" fill="none" stroke="#fff" stroke-width="2.6" stroke-linecap="round" stroke-linejoin="round"><path d="m6 9 6 6 6-6"/></svg>

<!-- top tab bar -->
<div id="topbar">
  <div class="tab" style="left:8px;width:134px">video_ltx2_3_i2v<span class="dot" style="left:115px"></span></div>
  <div class="tsep" style="left:142px"></div>
  <div class="tab" style="left:150px;width:170px">image_qwen_image...<span class="dot" style="left:152px"></span></div>
  <div class="tsep" style="left:320px"></div>
  <div class="tab act" style="left:321px;width:179px;text-indent:7px">image_firered_imag...<span class="dot" style="left:160px"></span></div>
  <div class="tsep" style="left:500px"></div>
  <svg class="abs" style="left:509px;top:9px" width="17" height="17" viewBox="0 0 17 17" fill="none" stroke="#9a9a9a" stroke-width="1.3"><path d="M8.5 1.5v14M1.5 8.5h14"/></svg>
</div>

<!-- sidebar -->
<div id="side">
  <!-- logo -->
  <svg class="abs" style="left:17px;top:21px" width="18" height="18" viewBox="0 0 18 18"><path d="M6.2 1.6h9.3l-1.2 4.2H8.4L6.9 11h5.9l-1.2 4.2H2.9l1-3.6h-2L4 4.6h1.4z" fill="#fff"/></svg>
  <svg class="abs" style="left:36.5px;top:25px" width="11" height="11" viewBox="0 0 24 24" fill="none" stroke="#9a9a9a" stroke-width="2.4" stroke-linecap="round" stroke-linejoin="round"><path d="m6 9 6 6 6-6"/></svg>

  <svg class="abs" style="left:17.5px;top:62.5px" width="18" height="18" viewBox="0 0 24 24" fill="none" stroke="#9b9b9b" stroke-width="1.9" stroke-linecap="round" stroke-linejoin="round"><path d="M3 12a9 9 0 1 0 9-9 9.75 9.75 0 0 0-6.74 2.74L3 8"/><path d="M3 3v5h5"/><path d="M12 7v5l4 2"/></svg>
  <div class="abs" style="left:25px;top:60px;width:14px;height:14px;border-radius:50%;background:#1a8cf0;color:#fff;font-size:9.5px;font-weight:bold;line-height:14px;text-align:center">1</div>
  <div class="sl" style="top:91.5px">queue.jobHistory</div>

  <svg class="abs" style="left:18px;top:116px" width="18" height="18" viewBox="0 0 24 24" fill="none" stroke="#9b9b9b" stroke-width="1.9" stroke-linecap="round" stroke-linejoin="round"><path d="M12.5 21H19a2 2 0 0 0 2-2V5a2 2 0 0 0-2-2H5a2 2 0 0 0-2 2v6.5"/><path d="M8 8h.01"/><path d="M7.8 12.6l1.2 3 3 1.2-3 1.2-1.2 3-1.2-3-3-1.2 3-1.2z"/><path d="M21 17a4 4 0 0 0-5.5-3.4"/></svg>
  <div class="sl" style="top:144px">sideToolbar.labels.assets</div>

  <svg class="abs" style="left:17px;top:169px" width="20" height="18" viewBox="0 0 20 18" fill="none" stroke="#9b9b9b" stroke-width="1.5" stroke-linecap="round" stroke-linejoin="round"><rect x="6" y="5.2" width="9" height="7.2" rx="2.6"/><path d="M2.2 9h3.8M15 6.6h3.2M11 12.4"/></svg>
  <div class="sl" style="top:196.5px">sideToolbar.labels.nodes</div>

  <svg class="abs" style="left:17.5px;top:221px" width="19" height="19" viewBox="0 0 24 24" fill="none" stroke="#9b9b9b" stroke-width="1.9" stroke-linecap="round" stroke-linejoin="round"><rect x="3" y="6" width="6.5" height="6.5" rx="1.6"/><rect x="3" y="15" width="6.5" height="6.5" rx="1.6"/><rect x="12.5" y="15" width="6.5" height="6.5" rx="1.6"/><path d="M16.5 2.5l1.1 2.9 2.9 1.1-2.9 1.1-1.1 2.9-1.1-2.9-2.9-1.1 2.9-1.1z"/></svg>
  <div class="sl" style="top:249px">sideToolbar.labels.models</div>

  <svg class="abs" style="left:16.5px;top:271.5px" width="21" height="21" viewBox="0 0 29 29" fill="none" stroke="#9b9b9b" stroke-width="1.95" stroke-linecap="round" stroke-linejoin="round"><rect x="3.6" y="3.8" width="7.8" height="7.8" rx="2.8"/><rect x="17.2" y="3.8" width="7.8" height="7.8" rx="2.8"/><rect x="17.2" y="17.2" width="7.8" height="7.8" rx="2.8"/><path d="M11.4 7.7h5.8"/><path d="M7.5 11.6v4.6a4.9 4.9 0 0 0 4.9 4.9h4.8"/></svg>
  <div class="sl" style="top:301.5px">sideToolbar.labels.workflows</div>

  <svg class="abs" style="left:18px;top:326px" width="18" height="18" viewBox="0 0 24 24" fill="none" stroke="#9b9b9b" stroke-width="1.9" stroke-linecap="round" stroke-linejoin="round"><rect width="18" height="18" x="3" y="3" rx="2"/><path d="M3 9h18"/><path d="M9 21V9"/></svg>
  <div class="sl" style="top:354px">linearMode.appModeToolbar.apps</div>

  <svg class="abs" style="left:17px;top:378px" width="20" height="18" viewBox="0 0 20 18" fill="none" stroke="#9b9b9b" stroke-width="1.5" stroke-linecap="round" stroke-linejoin="round"><path d="M5.3 1.2h12a1.6 1.6 0 0 1 1.55 2l-.55 2.2a2 2 0 0 1-1.95 1.5h-12a1.6 1.6 0 0 1-1.55-2l.55-2.2a2 2 0 0 1 1.95-1.5z"/><path d="M3.6 10.3h1.8a1.3 1.3 0 0 1 1.25 1.65l-.75 3a1.7 1.7 0 0 1-1.65 1.3H2.5a1.3 1.3 0 0 1-1.25-1.65l.75-3a1.7 1.7 0 0 1 1.6-1.3z"/><path d="M10.6 10.3h5.3a1.3 1.3 0 0 1 1.25 1.65l-.75 3a1.7 1.7 0 0 1-1.65 1.3H9.5a1.3 1.3 0 0 1-1.25-1.65l.75-3a1.7 1.7 0 0 1 1.6-1.3z"/></svg>
  <div class="sl" style="top:406.5px;font-size:10.2px;letter-spacing:0">Templates</div>

  <svg class="abs" style="left:18px;top:758px" width="18" height="18" viewBox="0 0 24 24" fill="none" stroke="#9b9b9b" stroke-width="1.9" stroke-linecap="round" stroke-linejoin="round"><circle cx="12" cy="12" r="10"/><path d="M9.09 9a3 3 0 0 1 5.83 1c0 2-3 3-3 3"/><path d="M12 17h.01"/></svg>
  <div class="sl" style="top:782.6px;font-size:10.2px;letter-spacing:0">Help</div>

  <svg class="abs" style="left:18px;top:810px" width="18" height="18" viewBox="0 0 24 24" fill="none" stroke="#b0b0b0" stroke-width="2.1" stroke-linecap="round" stroke-linejoin="round"><polyline points="4 17 10 11 4 5"/><line x1="12" x2="20" y1="19" y2="19"/></svg>
  <div class="sl" style="top:838px;font-size:10.2px;letter-spacing:0">Console</div>

  <svg class="abs" style="left:18px;top:862px" width="18" height="18" viewBox="0 0 24 24" fill="none" stroke="#9b9b9b" stroke-width="1.9" stroke-linecap="round" stroke-linejoin="round"><path d="M10 8h.01"/><path d="M12 12h.01"/><path d="M14 8h.01"/><path d="M16 12h.01"/><path d="M18 8h.01"/><path d="M6 8h.01"/><path d="M7 16h10"/><path d="M8 12h.01"/><rect width="20" height="16" x="2" y="4" rx="2"/></svg>
  <div class="sl" style="top:890px;font-size:10.2px;letter-spacing:0">Shortcuts</div>

  <svg class="abs" style="left:18px;top:914px" width="18" height="18" viewBox="0 0 24 24" fill="none" stroke="#b0b0b0" stroke-width="1.9" stroke-linecap="round" stroke-linejoin="round"><path d="M12.22 2h-.44a2 2 0 0 0-2 2v.18a2 2 0 0 1-1 1.73l-.43.25a2 2 0 0 1-2 0l-.15-.08a2 2 0 0 0-2.73.73l-.22.38a2 2 0 0 0 .73 2.73l.15.1a2 2 0 0 1 1 1.72v.51a2 2 0 0 1-1 1.74l-.15.09a2 2 0 0 0-.73 2.73l.22.38a2 2 0 0 0 2.73.73l.15-.08a2 2 0 0 1 2 0l.43.25a2 2 0 0 1 1 1.73V20a2 2 0 0 0 2 2h.44a2 2 0 0 0 2-2v-.18a2 2 0 0 1 1-1.73l.43-.25a2 2 0 0 1 2 0l.15.08a2 2 0 0 0 2.73-.73l.22-.39a2 2 0 0 0-.73-2.73l-.15-.08a2 2 0 0 1-1-1.74v-.5a2 2 0 0 1 1-1.74l.15-.09a2 2 0 0 0 .73-2.73l-.22-.38a2 2 0 0 0-2.73-.73l-.15.08a2 2 0 0 1-2 0l-.43-.25a2 2 0 0 1-1-1.73V4a2 2 0 0 0-2-2z"/><circle cx="12" cy="12" r="3"/></svg>
  <div class="sl" style="top:943px;font-size:10.2px;letter-spacing:0">Settings</div>
</div>

<div id="stats">T: 0.00s
I: 0
N: 20 [20]
V: 46
FPS:103.09</div>

<!-- action bar -->
<div id="actbar"></div>
<svg class="abs" style="left:1268px;top:55px" width="12" height="16" viewBox="0 0 12 16" fill="#8a8a8a"><circle cx="3.4" cy="3" r="1"/><circle cx="8.6" cy="3" r="1"/><circle cx="3.4" cy="8" r="1"/><circle cx="8.6" cy="8" r="1"/><circle cx="3.4" cy="13" r="1"/><circle cx="8.6" cy="13" r="1"/></svg>
<div class="ab" style="left:1285px;width:149.5px"></div>
<div class="abs" style="left:1296px;top:47px;width:12px;line-height:29.6px;font-size:14px;color:#fff;text-align:center">1</div>
<svg class="abs" style="left:1320px;top:49px" width="12" height="26" viewBox="0 0 12 26" fill="none" stroke="#6f6f6f" stroke-width="1.2" stroke-linecap="round" stroke-linejoin="round"><path d="M3 7.4l3-3 3 3"/><path d="M3 18.6l3 3 3-3"/></svg>
<div class="ab" style="left:1337.5px;width:75px;background:#1a8bee;border-radius:8px"></div>
<svg class="abs" style="left:1352px;top:53.5px" width="17" height="17" viewBox="0 0 24 24" fill="none" stroke="#fff" stroke-width="2" stroke-linecap="round" stroke-linejoin="round"><polygon points="6 3 20 12 6 21 6 3"/></svg>
<div class="abs" style="left:1373px;top:47px;line-height:29.6px;font-size:13.6px;color:#fff;margin-top:.7px">Run</div>
<svg class="abs" style="left:1416.5px;top:56px" width="12" height="12" viewBox="0 0 24 24" fill="none" stroke="#a8a8a8" stroke-width="2.4" stroke-linecap="round" stroke-linejoin="round"><path d="m6 9 6 6 6-6"/></svg>
<div class="ab" style="left:1442px;width:30px;background:#bf4141"></div>
<svg class="abs" style="left:1450px;top:55px" width="14" height="14" viewBox="0 0 24 24" fill="none" stroke="#fff" stroke-width="2.4" stroke-linecap="round" stroke-linejoin="round"><path d="M18 6 6 18"/><path d="m6 6 12 12"/></svg>
<div class="ab" style="left:1479.3px;width:72px"></div>
<div class="abs" style="left:1479.3px;top:47px;width:72px;text-align:center;line-height:29.6px;font-size:13.9px;color:#fff;letter-spacing:.15px;margin-top:.7px">1 active</div>
<div class="abs" style="left:1545.5px;top:45.2px;width:7.6px;height:7.6px;border-radius:50%;background:#1a8bee"></div>
<div class="ab" style="left:1558.5px;width:30.5px"></div>
<svg class="abs" style="left:1565.5px;top:53.5px" width="16.5" height="16.5" viewBox="0 0 24 24" fill="none" stroke="#fff" stroke-width="2" stroke-linecap="round" stroke-linejoin="round"><rect width="18" height="18" x="3" y="3" rx="2"/><path d="M15 3v18"/></svg>

<!-- minimap -->
<div id="mini">
  <div class="abs" style="left:0;top:29.5px;width:235px;height:1px;background:#303032"></div>
  <svg class="abs" style="left:7px;top:7.3px" width="14" height="14" viewBox="0 0 24 24" fill="none" stroke="#b5b5b5" stroke-width="2" stroke-linecap="round" stroke-linejoin="round"><path d="M21 7H11"/><path d="M14 17H3"/><circle cx="18" cy="17" r="3"/><circle cx="6" cy="7" r="3"/></svg>
  <svg class="abs" style="left:213px;top:7px" width="15" height="15" viewBox="0 0 24 24" fill="none" stroke="#b5b5b5" stroke-width="1.9" stroke-linecap="round" stroke-linejoin="round"><path d="M18 6 6 18"/><path d="m6 6 12 12"/></svg>
  <svg class="abs" style="left:0;top:35.3px" width="235" height="130" viewBox="1361 795.5 235 130">
<rect x="1362.7" y="800.3" width="188.2" height="116.7" fill="#474747" stroke="#fff" stroke-width="1.8"/>
<g fill="#4b86b8" fill-opacity=".62">
<rect x="1391.37" y="817.05" width="38.04" height="59.14"/>
<rect x="1431.88" y="817.05" width="43.19" height="35.48"/>
<rect x="1477.48" y="817.05" width="41.87" height="26.42"/>
<rect x="1477.48" y="845.77" width="41.87" height="26.34"/>
<rect x="1431.88" y="855.85" width="43.19" height="43.21"/>
<rect x="1391.37" y="878.65" width="38.91" height="20.44"/>
</g>
<g fill="#4497dc">
<rect x="1393.03" y="807.4" width="33.12" height="6.95"/>
<rect x="1393.97" y="825.11" width="33.46" height="8.02"/>
<rect x="1393.97" y="838.64" width="33.46" height="8.12"/>
<rect x="1393.97" y="852.98" width="33.46" height="9.49"/>
<rect x="1393.97" y="867.34" width="33.46" height="6.68"/>
<rect x="1395.63" y="885.94" width="32.23" height="2.76"/>
<rect x="1395.63" y="892.69" width="32.39" height="4.51"/>
<rect x="1434.47" y="825.11" width="37.84" height="7.17"/>
<rect x="1435.3" y="835.32" width="37.28" height="5.35"/>
<rect x="1434.47" y="845.39" width="37.62" height="5.52"/>
<rect x="1433.6" y="862.28" width="37.89" height="14.72"/>
<rect x="1433.6" y="882.61" width="37.75" height="14.72"/>
<rect x="1480.9" y="824.28" width="17.67" height="7.43"/>
<rect x="1480.9" y="834.41" width="17.67" height="7.48"/>
<rect x="1500.39" y="830.16" width="17.63" height="7.15"/>
<rect x="1480.07" y="853" width="17.75" height="5.62"/>
<rect x="1480.07" y="864.03" width="17.75" height="5.46"/>
<rect x="1499.51" y="858.91" width="17.67" height="7.07"/>
<rect x="1522.23" y="823.37" width="22.59" height="40.71" fill="#4386c0"/>
<rect x="1547.69" y="823.39" width="16.8" height="4.44" fill="#2f7fc4"/>
</g>
<g stroke="#d8d0c4" stroke-opacity=".5" stroke-width=".7" fill="none">
<path d="M1426.66 826.7L1394.75 840.23M1427.09 887.53L1396.41 894.28M1426.66 868.93L1396.41 895.98M1426.66 826.7L1435.25 826.7M1426.66 840.23L1435.25 828.4M1425.38 808.99L1435.25 830.23M1471.54 826.7L1436.08 836.9M1471.82 836.9L1435.25 846.98M1426.66 854.57L1434.38 863.87M1426.66 868.93L1434.38 865.57M1427.09 887.53L1434.38 867.27M1426.66 854.57L1434.38 884.2M1426.66 868.93L1434.38 885.89M1427.09 887.53L1434.38 887.59M1497.81 825.87L1501.17 831.75M1497.81 836L1501.17 833.45M1425.38 808.99L1501.17 835.29M1497.05 854.59L1500.3 860.5M1497.05 865.62L1500.3 862.2M1425.38 808.99L1500.3 864.04M1471.32 846.98L1523.01 824.96M1470.72 863.87L1523.01 826.66M1470.58 884.2L1523.01 828.36M1427.26 894.28L1523.01 830.06M1517.25 831.75L1523.01 835.98M1516.42 860.5L1523.01 838.02M1544.06 824.96L1548.48 824.98M1426.66 868.93L1548.48 826.68"/>
</g></svg>
</div>

<!-- bottom toolbar -->
<div id="tool">
  <div class="abs" style="left:7px;top:7.5px;width:30.5px;height:30px;border-radius:7px;background:#333335"></div>
  <svg class="abs" style="left:14.5px;top:14.5px" width="16" height="16" viewBox="0 0 24 24" fill="none" stroke="#fff" stroke-width="2" stroke-linecap="round" stroke-linejoin="round"><path d="M4.037 4.688a.495.495 0 0 1 .651-.651l16 6.5a.5.5 0 0 1-.063.947l-6.124 1.58a2 2 0 0 0-1.438 1.435l-1.579 6.126a.5.5 0 0 1-.947.063z"/></svg>
  <svg class="abs" style="left:41.5px;top:15.5px" width="13" height="13" viewBox="0 0 24 24" fill="none" stroke="#fff" stroke-width="2.3" stroke-linecap="round" stroke-linejoin="round"><path d="m6 9 6 6 6-6"/></svg>
  <div class="abs" style="left:62px;top:9px;width:1px;height:26px;background:#303032"></div>
  <svg class="abs" style="left:73.5px;top:14px" width="16.5" height="16.5" viewBox="0 0 24 24" fill="none" stroke="#fff" stroke-width="2" stroke-linecap="round" stroke-linejoin="round"><circle cx="12" cy="12" r="3"/><path d="M3 7V5a2 2 0 0 1 2-2h2"/><path d="M17 3h2a2 2 0 0 1 2 2v2"/><path d="M21 17v2a2 2 0 0 1-2 2h-2"/><path d="M7 21H5a2 2 0 0 1-2-2v-2"/></svg>
  <div class="abs" style="left:106px;top:7.5px;line-height:30px;font-size:12.3px;font-weight:bold;color:#fff">76%</div>
  <svg class="abs" style="left:135.5px;top:15.5px" width="13" height="13" viewBox="0 0 24 24" fill="none" stroke="#fff" stroke-width="2.3" stroke-linecap="round" stroke-linejoin="round"><path d="m6 9 6 6 6-6"/></svg>
  <div class="abs" style="left:160px;top:9px;width:1px;height:26px;background:#303032"></div>
  <div class="abs" style="left:164.5px;top:7.5px;width:30.5px;height:30px;border-radius:7px;background:#333335"></div>
  <svg class="abs" style="left:171.5px;top:14px" width="16.5" height="16.5" viewBox="0 0 24 24" fill="none" stroke="#fff" stroke-width="2" stroke-linecap="round" stroke-linejoin="round"><path d="M14.106 5.553a2 2 0 0 0 1.788 0l3.659-1.83A1 1 0 0 1 21 4.619v12.764a1 1 0 0 1-.553.894l-4.553 2.277a2 2 0 0 1-1.788 0l-4.212-2.106a2 2 0 0 0-1.788 0l-3.659 1.83A1 1 0 0 1 3 19.381V6.618a1 1 0 0 1 .553-.894l4.553-2.277a2 2 0 0 1 1.788 0z"/><path d="M15 5.764v15"/><path d="M9 3.236v15"/></svg>
  <svg class="abs" style="left:204.5px;top:14px" width="17" height="17" viewBox="0 0 24 24" fill="none" stroke="#fff" stroke-width="2" stroke-linecap="round" stroke-linejoin="round"><circle cx="17.8" cy="6" r="2.6"/><circle cx="6.2" cy="18" r="2.6"/><path d="M9 18h2.6a4.5 4.5 0 0 0 3.6-1.8"/><path d="M15 6h-2.6a4.5 4.5 0 0 0-3.6 1.8"/><path d="M3.5 4.5l17 15.5"/></svg>
</div>

</body></html>
